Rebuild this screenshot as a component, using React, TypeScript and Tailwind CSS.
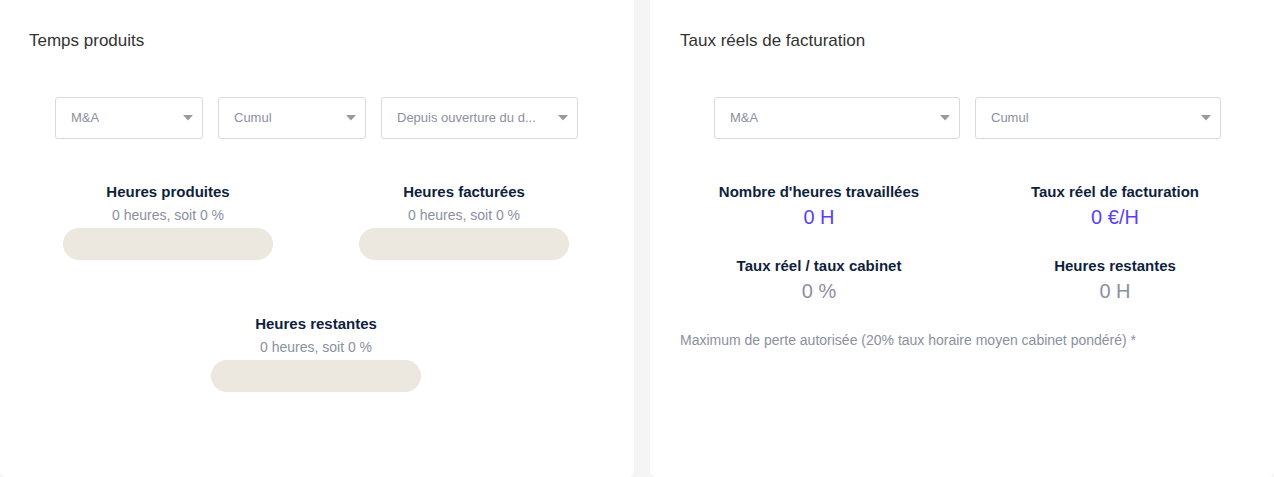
import React from "react";

const font = { fontFamily: '"Liberation Sans", Arial, sans-serif' };

function Select({ label, w }: { label: string; w: string }) {
  return (
    <div
      className={`${w} h-[42px] border border-[#d9dade] rounded-[3px] bg-white flex items-center justify-between pl-[15px] pr-[9px] shrink-0`}
    >
      <span className="text-[13px] text-[#8b90a0] truncate">{label}</span>
      <svg width="10" height="6" viewBox="0 0 10 6" className="shrink-0 ml-2">
        <path d="M0 0 L10 0 L5 5.5 Z" fill="#9a9a9a" />
      </svg>
    </div>
  );
}

function Bar({ title }: { title: string }) {
  return (
    <div className="flex flex-col items-center">
      <div className="text-[15px] leading-[20px] font-bold text-[#0f1f3d]">{title}</div>
      <div className="text-[14px] leading-[18px] text-[#8b90a0] mt-[4px]">0 heures, soit 0 %</div>
      <div className="w-[210px] h-[32px] rounded-full bg-[#ece7df] mt-[4px]" />
    </div>
  );
}

function Stat({ title, value, accent }: { title: string; value: string; accent?: boolean }) {
  return (
    <div className="flex flex-col items-center">
      <div className="text-[15px] leading-[20px] font-bold text-[#0f1f3d]">{title}</div>
      <div
        className={`text-[20px] leading-[24px] mt-[3px] ${accent ? "text-[#5a3ff5]" : "text-[#8b90a0]"}`}
      >
        {value}
      </div>
    </div>
  );
}

export default function App() {
  return (
    <div style={font} className="w-[1274px] h-[477px] bg-[#f5f5f5] flex gap-[16px] overflow-hidden">
      <div className="w-[634px] h-[477px] bg-white rounded-b-[6px] flex flex-col">
        <div className="pl-[29px] pt-[31px] text-[17px] leading-[20px] text-[#333333]">Temps produits</div>
        <div className="flex gap-[15px] mt-[46px] pl-[55px]">
          <Select label="M&A" w="w-[148px]" />
          <Select label="Cumul" w="w-[148px]" />
          <Select label="Depuis ouverture du d..." w="w-[197px]" />
        </div>
        <div className="ml-[20px] w-[592px] mt-[43px] grid grid-cols-2">
          <Bar title="Heures produites" />
          <Bar title="Heures facturées" />
        </div>
        <div className="ml-[20px] w-[592px] mt-[54px] flex justify-center">
          <Bar title="Heures restantes" />
        </div>
      </div>
      <div className="w-[624px] h-[477px] bg-white rounded-b-[6px] flex flex-col">
        <div className="pl-[30px] pt-[31px] text-[17px] leading-[20px] text-[#333333]">
          Taux réels de facturation
        </div>
        <div className="flex gap-[15px] mt-[46px] pl-[64px]">
          <Select label="M&A" w="w-[246px]" />
          <Select label="Cumul" w="w-[246px]" />
        </div>
        <div className="ml-[21px] w-[592px] mt-[43px] grid grid-cols-2 gap-y-[27px]">
          <Stat title="Nombre d'heures travaillées" value="0 H" accent />
          <Stat title="Taux réel de facturation" value="0 €/H" accent />
          <Stat title="Taux réel / taux cabinet" value="0 %" />
          <Stat title="Heures restantes" value="0 H" />
        </div>
        <div className="pl-[30px] mt-[28px] text-[14px] leading-[18px] text-[#8b90a0]">
          Maximum de perte autorisée (20% taux horaire moyen cabinet pondéré) *
        </div>
      </div>
    </div>
  );
}
